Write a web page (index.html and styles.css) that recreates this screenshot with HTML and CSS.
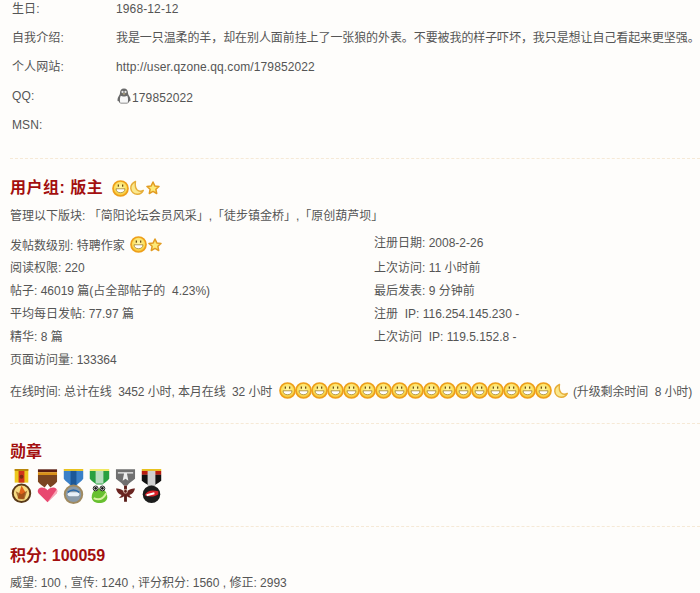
FILE: index.html
```html
<!DOCTYPE html>
<html lang="zh-CN">
<head>
<meta charset="utf-8">
<title>用户资料</title>
<link rel="stylesheet" href="styles.css">
</head>
<body>
<svg class="defs" width="0" height="0" aria-hidden="true">
  <defs>
    <radialGradient id="face" cx="50%" cy="40%" r="60%">
      <stop offset="0" stop-color="#fff7a8"/>
      <stop offset="0.7" stop-color="#fbdc55"/>
      <stop offset="1" stop-color="#f3b52c"/>
    </radialGradient>
    <symbol id="smile" viewBox="0 0 17 17">
      <circle cx="8.500" cy="8.500" r="7.500" fill="url(#face)" stroke="#ee9f1a" stroke-width="1.700"/>
      <rect x="5.700" y="4.500" width="1.300" height="2.200" fill="#6e5014"/>
      <rect x="10" y="4.500" width="1.300" height="2.200" fill="#6e5014"/>
      <path d="M4 8.800h9c-.2 2.600-2 3.900-4.500 3.900S4.200 11.400 4 8.800z" fill="#fff" stroke="#96741f" stroke-width=".7"/>
    </symbol>
    <symbol id="moon" viewBox="0 0 16 16">
      <path d="M6.500 1.500C3.200 3 1.500 5.600 1.800 8.600c.4 3.500 3.300 5.900 6.700 5.700 2.700-.2 4.800-1.600 5.800-3.900-2.200 1.100-4.700.9-6.300-.7-1.700-1.800-2-5.200-1.500-8.200z" fill="#fbe98e" stroke="#e6ae3a" stroke-width="1.400" stroke-linejoin="round"/>
    </symbol>
    <symbol id="star" viewBox="0 0 14 14">
      <path d="M7 1l1.800 3.900 4.200.5-3.100 2.900.8 4.200L7 10.400 3.300 12.500l.8-4.200L1 5.400l4.200-.5z" fill="#fdea78" stroke="#e29c22" stroke-width="1.500" stroke-linejoin="round"/>
    </symbol>
    <symbol id="qq" viewBox="0 0 14 16">
      <path d="M7 .5C4.300.5 3 2.300 3 5c0 .9-.3 1.500-.9 2.400C1 8.900.5 10.400.5 12.200c0 1 .5 1.200 1.200.8.3 1.300 1.200 2.500 2.300 2.500h6c1.100 0 2-1.200 2.300-2.500.7.400 1.200.2 1.200-.8 0-1.800-.5-3.300-1.600-4.800C11.300 6.500 11 5.900 11 5c0-2.700-1.300-4.500-4-4.500z" fill="#6a6a6a"/>
      <path d="M3.800 7.800c1 1 5.400 1 6.400 0 .9 1.600 1.100 4 .6 6.900H3.200c-.5-2.900-.3-5.300.6-6.900z" fill="#f7f7f7"/>
      <circle cx="5.500" cy="3.900" r="1.100" fill="#e8e8e8"/>
      <circle cx="8.500" cy="3.900" r="1.100" fill="#e8e8e8"/>
      <path d="M5.300 5.500h3.400L7 6.800z" fill="#d8c48a"/>
    </symbol>
  </defs>
</svg>

<main class="page">
  <section class="info">
    <div class="info-row"><span class="info-label">生日:</span><span>1968-12-12</span></div>
    <div class="info-row"><span class="info-label">自我介绍:</span><span class="intro">我是一只温柔的羊，却在别人面前挂上了一张狼的外表。不要被我的样子吓坏，我只是想让自己看起来更坚强。</span></div>
    <div class="info-row"><span class="info-label">个人网站:</span><span>http://user.qzone.qq.com/179852022</span></div>
    <div class="info-row"><span class="info-label">QQ:</span><span class="qq"><svg class="ico-qq"><use href="#qq"/></svg>179852022</span></div>
    <div class="info-row"><span class="info-label">MSN:</span><span></span></div>
  </section>

  <section class="block group">
    <h2 class="title title-group">用户组: 版主
      <span class="icons title-icons"><svg class="i-smile"><use href="#smile"/></svg><svg class="i-moon"><use href="#moon"/></svg><svg class="i-star"><use href="#star"/></svg></span>
    </h2>
    <p class="manage">管理以下版块: 「简阳论坛会员风采」,「徒步镇金桥」,「原创葫芦坝」</p>
    <div class="stats">
      <ul class="stat-col">
        <li>发帖数级别: 特聘作家 <span class="icons level-icons"><svg class="i-smile"><use href="#smile"/></svg><svg class="i-star"><use href="#star"/></svg></span></li>
        <li>阅读权限: 220</li>
        <li>帖子: 46019 篇(占全部帖子的&nbsp; 4.23%)</li>
        <li>平均每日发帖: 77.97 篇</li>
        <li>精华: 8 篇</li>
        <li>页面访问量: 133364</li>
      </ul>
      <ul class="stat-col-right">
        <li>注册日期: 2008-2-26</li>
        <li>上次访问: 11 小时前</li>
        <li>最后发表: 9 分钟前</li>
        <li>注册&nbsp; IP: 116.254.145.230 -</li>
        <li>上次访问&nbsp; IP: 119.5.152.8 -</li>
      </ul>
    </div>
    <p class="online"><span class="online-text">在线时间: 总计在线&nbsp; 3452 小时, 本月在线&nbsp; 32 小时</span>
      <span class="icons online-icons">
        <svg class="i-smile"><use href="#smile"/></svg><svg class="i-smile"><use href="#smile"/></svg><svg class="i-smile"><use href="#smile"/></svg><svg class="i-smile"><use href="#smile"/></svg><svg class="i-smile"><use href="#smile"/></svg><svg class="i-smile"><use href="#smile"/></svg><svg class="i-smile"><use href="#smile"/></svg><svg class="i-smile"><use href="#smile"/></svg><svg class="i-smile"><use href="#smile"/></svg><svg class="i-smile"><use href="#smile"/></svg><svg class="i-smile"><use href="#smile"/></svg><svg class="i-smile"><use href="#smile"/></svg><svg class="i-smile"><use href="#smile"/></svg><svg class="i-smile"><use href="#smile"/></svg><svg class="i-smile"><use href="#smile"/></svg><svg class="i-smile"><use href="#smile"/></svg><svg class="i-smile"><use href="#smile"/></svg><svg class="i-moon"><use href="#moon"/></svg>
      </span>
      <span class="online-rest">(升级剩余时间&nbsp; 8 小时)</span></p>
  </section>

  <section class="block medals-block">
    <h2 class="title">勋章</h2>
    <div class="medals">
      <svg class="medal" viewBox="0 0 20 36"><rect x="3" y="0" width="14" height="14" fill="#ecc81e"/><rect x="7" y="2" width="6" height="12" fill="#d0321a"/><rect x="3" y="0" width="14" height="2" fill="#b8860b"/><circle cx="10" cy="8" r="2" fill="#7a2a10"/><circle cx="10" cy="25" r="9" fill="#f6dc84" stroke="#5a3a18" stroke-width="2"/><path d="M6 30l4-13 4 7-2 7z" fill="#e0641a"/><path d="M4 23l6 3 6-4-3 9H7z" fill="#8a4a18" opacity=".7"/></svg>
      <svg class="medal" viewBox="0 0 22 36"><rect x="1" y="0" width="20" height="3" fill="#5a1c10"/><rect x="1" y="3" width="20" height="3" fill="#d89018"/><path d="M1 6h20v7c-2 3-5 4-7 6l-3-4-3 4c-2-2-5-3-7-6z" fill="#7a4420"/><path d="M11 34.500L1.500 25c-2-3 .5-6 3.500-6 2.500 0 4.500 1 6 3 1.500-2 3.500-3 6-3 3 0 5.500 3 3.500 6z" fill="#e84870"/><path d="M11 34.500l9.500-9.500c1-1.500 1-3 .3-4.200z" fill="#f8a8b8"/></svg>
      <svg class="medal" viewBox="0 0 20 36"><rect x="0" y="0" width="20" height="2" fill="#e8c21e"/><path d="M0 2h20v8c-2 3-5 4-7 7H7c-2-3-5-4-7-7z" fill="#3a80c8"/><rect x="7" y="2" width="6" height="15" fill="#1c5898"/><circle cx="10" cy="26" r="9" fill="#8a9aa8" stroke="#a08a60" stroke-width="2"/><rect x="4" y="24" width="12" height="4" rx="2" fill="#e8f0f8"/><path d="M4 24q6-5 12 0" fill="none" stroke="#2a68a8" stroke-width="1.500"/></svg>
      <svg class="medal" viewBox="0 0 20 36"><rect x="0" y="0" width="20" height="2" fill="#f0e860"/><path d="M0 2h20v8c-2 3-5 4-7 6H7c-2-2-5-3-7-6z" fill="#28a040"/><rect x="6" y="2" width="8" height="13" fill="#b8dcc0"/><path d="M2 29c0-6 4-9 8-9s8 3 8 9c0 4-4 6-8 6s-8-2-8-6z" fill="#68c030"/><path d="M4 30q8 4 13-5" fill="none" stroke="#d8f0a0" stroke-width="2"/><circle cx="6" cy="20" r="2.500" fill="#fff" stroke="#222"/><circle cx="13" cy="20" r="2.500" fill="#fff" stroke="#222"/><circle cx="6" cy="20" r="1.400" fill="#111"/><circle cx="13" cy="20" r="1.400" fill="#111"/></svg>
      <svg class="medal" viewBox="0 0 22 36"><path d="M1 0h20v10c-3 3-6 4-8 7H9c-2-3-5-4-8-7z" fill="#707070"/><path d="M3 3h16v1.500h-6.500L14 12l-3-2-3 2 1.500-7.500H3z" fill="#eee"/><path d="M11 17v17" stroke="#5a1c18" stroke-width="3"/><path d="M11 25C8 21 5 20 1 20c1 4 3 6 6 7-1 1.500-2 2.500-3 3 3 0 5-1 7-3 2 2 4 3 7 3-1-.5-2-1.500-3-3 3-1 5-3 6-7-4 0-7 1-10 5z" fill="#6a2420"/><circle cx="11" cy="23" r="2" fill="none" stroke="#d8b8a8"/></svg>
      <svg class="medal" viewBox="0 0 20 36"><rect x="0" y="0" width="20" height="2" fill="#e8c21e"/><rect x="0" y="2" width="20" height="4" fill="#b81c10"/><path d="M0 6h20v6c-2 2-5 3-7 5H7c-2-2-5-3-7-5z" fill="#111"/><rect x="6" y="2" width="8" height="15" fill="#d0d0d0"/><circle cx="10" cy="26" r="9" fill="#1c1c1c"/><path d="M3 27c2-5 8-6 14-4v3c-4 3-9 3-14 1z" fill="#d82028"/><path d="M5 27l8-2" stroke="#fff" stroke-width="2"/></svg>
    </div>
  </section>

  <section class="block score">
    <h2 class="title">积分: 100059</h2>
    <p class="score-line">威望: 100 , 宣传: 1240 , 评分积分: 1560 , 修正: 2993</p>
  </section>
</main>
</body>
</html>
```
FILE: styles.css
```css
html, body {
  margin: 0;
  padding: 0;
  overflow: hidden;
}
body {
  background: #fefdfb;
  color: #555;
  font: 12px/18px "Liberation Sans", "Noto Sans CJK SC", sans-serif;
  height: 593px;
}
.defs { position: absolute; }
.page { padding: 0 0 0 10px; }
p, ul, h2 { margin: 0; padding: 0; }
ul { list-style: none; }

.info { padding: 0 0 13px 2px; }
.info-row { display: flex; height: 29px; align-items: flex-start; letter-spacing: .12px; }
.info-label { width: 104px; flex: none; }
.intro { white-space: nowrap; letter-spacing: -.09px; }
.qq { display: inline-flex; align-items: flex-end; height: 20px; margin-top: -1px; padding-top: 1px; box-sizing: content-box; }
.ico-qq { width: 14px; height: 16px; margin: 0 1px 3px 1px; }

.block { border-top: 1px dashed #f6e9d6; }

.title {
  color: #a30f0f;
  font-size: 16px;
  line-height: 22px;
  font-weight: bold;
}
.title-group { display: flex; align-items: center; gap: 9px; letter-spacing: .5px; }

.icons { display: inline-flex; align-items: center; vertical-align: -3px; }
.icons svg { flex: none; }
.i-smile { width: 17px; height: 17px; }
.i-moon { width: 16px; height: 16px; }
.i-star { width: 14px; height: 14px; margin-left: 1px; }

.group { padding-top: 18px; }
.manage { margin-top: 8px; height: 29px; }
.stats { display: flex; }
.stat-col { width: 364px; flex: none; }
.stat-col-right { flex: 1; min-width: 0; margin-top: -2px; }
.stat-col li, .stat-col-right li { height: 23px; line-height: 18px; white-space: nowrap; }
.level-icons { margin-left: 2px; }
.stat-col-right li:first-child { height: 25px; }
.online { margin-top: 8px; white-space: nowrap; height: 41px; }
.online-text { letter-spacing: -.1px; }
.online-icons { margin-left: 3px; }
.online-icons .i-smile { margin-right: -1px; }
.online-icons .i-moon { margin-left: 2px; }
.online-rest { letter-spacing: -.1px; margin-left: 1px; }

.medals-block { padding-top: 17px; height: 85px; }
.medals { display: flex; margin-top: 6px; padding-left: 1px; gap: 5px; }
.medal { width: 21px; height: 35px; flex: none; }

.score { padding-top: 18px; }
.score-line { margin-top: 7px; }
```
